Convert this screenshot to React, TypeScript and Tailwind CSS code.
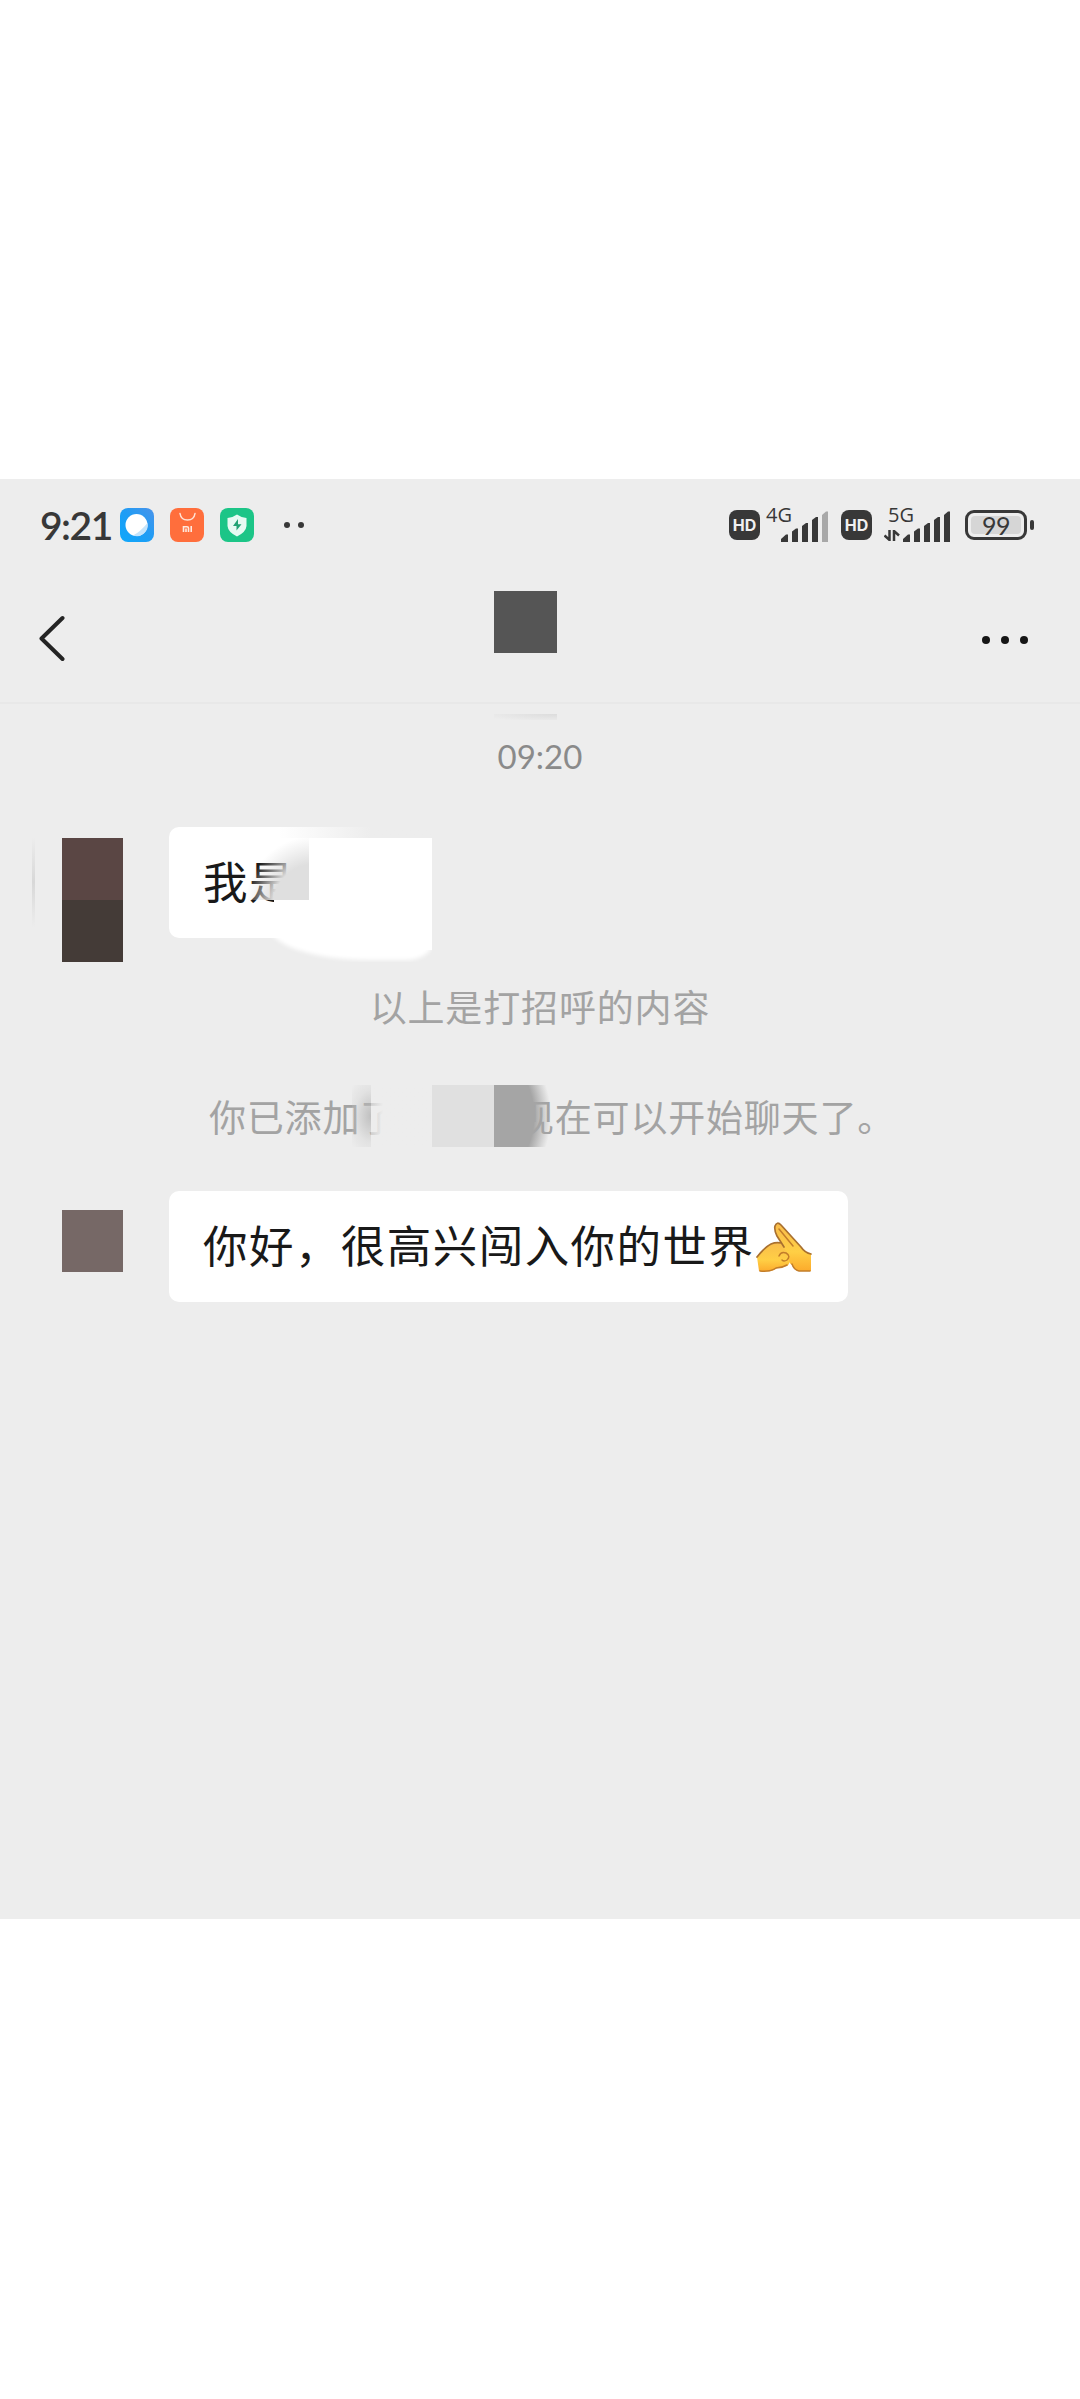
import type { ReactNode } from 'react';

const FONT = "font-['Noto_Sans_CJK_SC','Noto_Sans',sans-serif]";

function BrowserIcon() {
  return (
    <svg width="34" height="34" viewBox="0 0 34 34">
      <defs>
        <linearGradient id="browser" x1="0" y1="1" x2="1" y2="0">
          <stop offset="0" stopColor="#0fa8fb" />
          <stop offset="0.5" stopColor="#1e9df5" />
          <stop offset="1" stopColor="#4a93ea" />
        </linearGradient>
      </defs>
      <rect width="34" height="34" rx="8" fill="url(#browser)" />
      <circle cx="16.5" cy="17" r="11" fill="#fff" />
      <path d="M27.500 15 A11 11 0 0 1 13 27.500 Q20 24 27.500 15Z" fill="#c5e4fb" />
    </svg>
  );
}

function StoreIcon() {
  return (
    <svg width="34" height="34" viewBox="0 0 34 34">
      <rect width="34" height="34" rx="8" fill="#ff6e3c" />
      <path d="M10 5.5 Q11 12 17.5 12 Q24 12 25 5.5" fill="none" stroke="#ffe3d6" strokeWidth="1.5" strokeLinecap="round" />
      <path d="M13.500 24 V18.700 H17 Q18.500 18.700 18.500 20 V24 M16 20.500 V24 M21.200 18 V24" fill="none" stroke="#ffe9df" strokeWidth="1.600" />
    </svg>
  );
}

function SecurityIcon() {
  return (
    <svg width="34" height="34" viewBox="0 0 34 34">
      <rect width="34" height="34" rx="8" fill="#1cc587" />
      <path d="M17 6.500 Q21 9.500 26.500 10 V18 Q26 24 17 28.500 Q8 24 7.500 18 V10 Q13 9.500 17 6.500Z" fill="#e6faf2" />
      <path d="M18 11 L13 18 H16.500 V22.500 L21.500 16.200 H18Z" fill="#22a374" />
    </svg>
  );
}

function HdBadge() {
  return (
    <div className="flex h-[30px] w-[31px] items-center justify-center rounded-[8px] bg-[#383838] font-['Inter',sans-serif] text-[16px] font-bold leading-none text-[#f0f0f0]">
      HD
    </div>
  );
}

function Signal({ weak }: { weak?: boolean }) {
  return (
    <svg width="48" height="31" viewBox="0 0 48 31" fill="#383838">
      <path d="M0 31 V28 L5 23.500 H7 V31Z" />
      <path d="M11 31 V20.500 L15 17.500 H17 V31Z" />
      <path d="M21 31 V15 L25 12 H27 V31Z" />
      <path d="M31 31 V9 L35 6 H37 V31Z" />
      <path d="M41 31 V4 L45 0.500 H47 V31Z" fill={weak ? '#a8a8a8' : '#383838'} />
    </svg>
  );
}

function Battery() {
  return (
    <div className="flex items-center gap-[3px]">
      <div className="flex h-[30px] w-[62px] rounded-[9px] border-[3px] border-[#383838] p-[3px]">
        <div className="flex flex-1 items-center justify-center rounded-[4px] bg-[#d6d6d6] font-['Lato',sans-serif] text-[25px] leading-none tracking-[-0.500px] text-[#383838]">
          99
        </div>
      </div>
      <div className="h-[10px] w-[4px] rounded-[2px] bg-[#383838]" />
    </div>
  );
}

function StatusBar() {
  return (
    <div className="flex h-[92px] items-center pl-[40px] text-[#383838]">
      <div className="w-[80px] font-['Lato',sans-serif] text-[39px] font-semibold leading-none tracking-[-1.500px]">9:21</div>
      <div className="flex gap-[16px]">
        <BrowserIcon />
        <StoreIcon />
        <SecurityIcon />
      </div>
      <div className="ml-[30px] flex gap-2">
        <i className="size-[6px] rounded-full bg-[#383838]" />
        <i className="size-[6px] rounded-full bg-[#383838]" />
      </div>
      <div className="ml-auto flex items-center pr-[46px]">
        <HdBadge />
        <div className="relative ml-[21px] mt-[3px]">
          <Signal weak />
          <span className="absolute left-[-15px] top-[-6px] font-['Open_Sans',sans-serif] text-[20px] leading-none">4G</span>
        </div>
        <div className="ml-[12px]">
          <HdBadge />
        </div>
        <div className="relative ml-[31px] mt-[3px]">
          <Signal />
          <span className="absolute left-[-15px] top-[-6px] font-['Open_Sans',sans-serif] text-[20px] leading-none">5G</span>
          <svg className="absolute left-[-19px] top-[19px]" width="16" height="11" viewBox="0 0 16 11" fill="none" stroke="#383838" strokeWidth="2.500">
            <path d="M5.500 0 V10 L0.500 5.500 M10 11 V1 L15 5.500" />
          </svg>
        </div>
        <div className="ml-[14px]">
          <Battery />
        </div>
      </div>
    </div>
  );
}

function Header() {
  return (
    <div className="flex h-[133px] items-start border-b-2 border-[#e8e8e8] pl-[39px] pr-[52px]">
      <svg className="mt-[44px]" width="27" height="47" viewBox="0 0 27 47" fill="none" stroke="#242424" strokeWidth="4" strokeLinecap="round" strokeLinejoin="round">
        <path d="M23.500 3 L2.500 23.500 L23.500 44" />
      </svg>
      <div className="ml-[428px] mt-[20px] h-[62px] w-[63px] bg-[#555555]" />
      <div className="ml-auto mt-[65px] flex gap-[11px]">
        <i className="size-[8px] rounded-full bg-[#151515]" />
        <i className="size-[8px] rounded-full bg-[#151515]" />
        <i className="size-[8px] rounded-full bg-[#151515]" />
      </div>
    </div>
  );
}

function Bubble({ children }: { children: ReactNode }) {
  return (
    <div className="flex h-[111px] items-center rounded-[10px] bg-white pb-[5px] pl-[34px] text-[44.500px] leading-none tracking-[1.450px] text-[#191919]">
      {children}
    </div>
  );
}

function Hands() {
  return (
    <svg className="ml-[2px] mt-[7px]" width="56" height="51" viewBox="0 0 56 51" strokeLinejoin="round" strokeLinecap="round">
      <defs>
        <linearGradient id="skin" x1="0" y1="0" x2="0" y2="1">
          <stop offset="0" stopColor="#f9bd4c" />
          <stop offset="0.600" stopColor="#ffcf45" />
          <stop offset="1" stopColor="#fcab2c" />
        </linearGradient>
      </defs>
      <path d="M1 35 Q9 25 15 22 Q22 19 30 23 L35 35 Q34 42 31 44 Q27 45 23 45 Q15 51 3 49Z" fill="url(#skin)" />
      <path d="M19 4 Q21 -1 25 3 L45 25 Q49 31 55 32 V49 H42 Q38 48 36 43 Q32 41 33 34 L21 14 Q18 8 19 4Z" fill="url(#skin)" />
      <path d="M1 35 Q9 25 15 22 Q20 20 25 21 M55 32 Q49 31 45 25 L25 3 Q21 -1 19 4 Q18 8 21 14 L28 25" fill="none" stroke="#a9702f" strokeWidth="1.700" />
      <path d="M23 7 L37 24 M23 34 Q25 29 30 31 Q35 34 31 38 Q28 40 26 38 M36 42 Q38 48 43 49 H54 M4 49 Q15 50 20 46 Q26 46 31 43" fill="none" stroke="#c27d2a" strokeWidth="1.500" />
    </svg>
  );
}

export default function App() {
  return (
    <div className={`flex h-[2399px] w-[1080px] flex-col bg-white pt-[479px] ${FONT}`}>
      <main className="h-[1440px] bg-[#ededed]">
        <StatusBar />
        <Header />
        <div className="relative h-[123px] pt-[34px] text-center font-['Lato',sans-serif] text-[33px] leading-[36px] text-[#8a8a8a]">
          <div className="absolute left-[494px] top-[10px] h-[6px] w-[63px] bg-[radial-gradient(ellipse_at_top_right,#dcdcdc,#ededed_90%)]" />
          09:20
        </div>

        <div className="relative flex h-[135px] items-start">
          <div className="absolute left-[32px] top-[10px] h-[90px] w-[3px] bg-gradient-to-b from-[#ededed] via-[#d8d8d8] to-[#ededed]" />
          <div className="ml-[62px] mt-[11px]">
            <div className="h-[62px] w-[61px] bg-[#5a4644]" />
            <div className="h-[62px] w-[61px] bg-[#443b37]" />
          </div>
          <div className="relative ml-[46px] h-[135px] w-[263px] overflow-hidden">
            <Bubble>我是</Bubble>
            {/* smeared privacy cover over the end of the greeting */}
            <div className="absolute left-[110px] top-0 h-[11px] w-[153px] bg-gradient-to-r from-transparent to-[#ededed] to-60%" />
            <div className="absolute left-[70px] top-[11px] h-[62px] w-[70px] bg-[radial-gradient(circle_at_76px_68px,#dfdfdf_42px,rgba(235,235,235,0)_70px)]" />
            <div className="absolute left-[105px] top-[73px] h-[14px] w-[35px] bg-white" />
            <div className="absolute left-[140px] top-[11px] h-[112px] w-[123px] bg-white" />
            <div className="absolute left-[100px] top-[80px] h-[53px] w-[163px] rounded-bl-[100px_34px] rounded-br-[26px_16px] bg-white blur-[2px]" />
          </div>
        </div>

        <div className="mt-[24px] text-center text-[37px] leading-[40px] tracking-[0.850px] text-[#a3a3a3]">以上是打招呼的内容</div>

        <div className="relative mt-[70px] flex text-[37px] leading-[40px] tracking-[0.800px] text-[#a3a3a3]">
          <span className="ml-[209px] w-[308px]">你已添加了</span>
          <span>现在可以开始聊天了。</span>
          <div className="absolute left-[352px] top-[-11px] h-[62px] w-[19px] bg-[radial-gradient(ellipse_at_right,rgba(180,180,180,0.8),rgba(200,200,200,0.3)_60%,rgba(237,237,237,0))]" />
          <div className="absolute left-[371px] top-[-11px] h-[62px] w-[61px] bg-gradient-to-r from-[#ededed]/60 to-[#ededed] to-20%" />
          <div className="absolute left-[432px] top-[-11px] h-[62px] w-[62px] bg-[#e0e0e0]" />
          <div className="absolute left-[494px] top-[-11px] h-[62px] w-[60px] bg-[radial-gradient(circle_at_-40px_50%,#a5a5a5_80px,rgba(165,165,165,0)_97px)]" />
        </div>

        <div className="mt-[55px] flex items-start">
          <div className="ml-[62px] mt-[19px] h-[62px] w-[61px] bg-[#766866]" />
          <div className="ml-[46px] w-[679px]">
            <Bubble>
              你好，很高兴闯入你的世界
              <Hands />
            </Bubble>
          </div>
        </div>
      </main>
    </div>
  );
}
